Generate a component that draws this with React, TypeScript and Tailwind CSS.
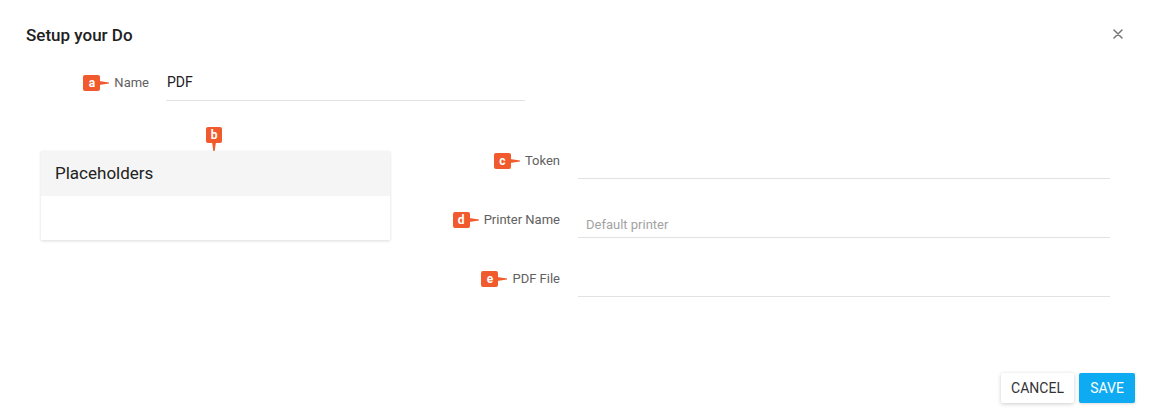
import React from "react";

const ORANGE = "bg-[#f05a2c]";

function MarkerRight({ letter }: { letter: string }) {
  return (
    <div className="flex items-center shrink-0">
      <div className={`${ORANGE} w-[17px] h-[16px] rounded-[2px] flex items-center justify-center text-white text-[12px] font-bold leading-none pb-[1px]`}>
        {letter}
      </div>
      <svg width="10" height="16" viewBox="0 0 10 16" className="-ml-[1px]">
        <polygon points="0,6 10,7.5 10,8.5 0,10" fill="#f05a2c" />
      </svg>
    </div>
  );
}

function MarkerDown({ letter }: { letter: string }) {
  return (
    <div className="flex flex-col items-center">
      <div className={`${ORANGE} w-[16px] h-[16px] rounded-[2px] flex items-center justify-center text-white text-[12px] font-bold leading-none pb-[1px]`}>
        {letter}
      </div>
      <svg width="16" height="10" viewBox="0 0 16 10" className="-mt-[1px]">
        <polygon points="6,0 10,0 8.5,10 7.5,10" fill="#f05a2c" />
      </svg>
    </div>
  );
}

function Field({ letter, label, placeholder }: { letter: string; label: string; placeholder?: string }) {
  return (
    <div className="flex h-[59px]">
      <div className="w-[170px] h-[36px] flex items-center justify-end gap-[5px]">
        <MarkerRight letter={letter} />
        <span className="text-[13px] text-[#616161]">{label}</span>
      </div>
      <div className="ml-[18px] w-[532px] h-[36px] border-b border-[#e2e2e2] flex items-end pl-[8px] pb-[4px]">
        {placeholder && <span className="text-[13px] text-[#a3a3a3] leading-[16px]">{placeholder}</span>}
      </div>
    </div>
  );
}

export default function App() {
  return (
    <div className="w-[1150px] h-[419px] bg-white flex flex-col" style={{ fontFamily: "Roboto, 'Liberation Sans', sans-serif" }}>
      <div className="flex justify-between items-center pt-[23px] pl-[26px] pr-[26px]">
        <h1 className="text-[17px] font-medium leading-[24px] text-[#212121]">Setup your Do</h1>
        <svg width="10" height="10" viewBox="0 0 10 10" className="mr-[1px] -mt-[2px]">
          <path d="M1 1 L9 9 M9 1 L1 9" stroke="#757575" strokeWidth="1.5" strokeLinecap="round" />
        </svg>
      </div>

      <div className="flex mt-[18px] h-[36px]">
        <div className="w-[149px] flex items-center justify-end gap-[5px]">
          <MarkerRight letter="a" />
          <span className="text-[13px] text-[#616161]">Name</span>
        </div>
        <div className="ml-[17px] w-[359px] border-b border-[#e2e2e2] flex items-center pl-[1px]">
          <span className="text-[14px] text-[#212121]">PDF</span>
        </div>
      </div>

      <div className="flex mt-[26px]">
        <div className="ml-[41px] w-[349px] flex flex-col items-center">
          <div className="-ml-[3px]">
            <MarkerDown letter="b" />
          </div>
          <div className="w-full -mt-[1px] bg-white shadow-[0_1px_3px_rgba(0,0,0,0.14)]">
            <div className="h-[45px] bg-[#f5f5f5] flex items-center pl-[14px]">
              <span className="text-[17px] text-[#212121]">Placeholders</span>
            </div>
            <div className="h-[44px]" />
          </div>
        </div>
        <div className="flex flex-col pt-[16px]">
          <Field letter="c" label="Token" />
          <Field letter="d" label="Printer Name" placeholder="Default printer" />
          <Field letter="e" label="PDF File" />
        </div>
      </div>

      <div className="mt-auto flex justify-end gap-[5px] pr-[15px] pb-[16px]">
        <button className="h-[30px] w-[73px] bg-white rounded-[2px] shadow-[0_1px_4px_rgba(0,0,0,0.2)] text-[14px] text-[#333]">CANCEL</button>
        <button className="h-[30px] w-[56px] bg-[#0eaaf2] rounded-[2px] shadow-[0_1px_3px_rgba(0,0,0,0.15)] text-[14px] text-white">SAVE</button>
      </div>
    </div>
  );
}
